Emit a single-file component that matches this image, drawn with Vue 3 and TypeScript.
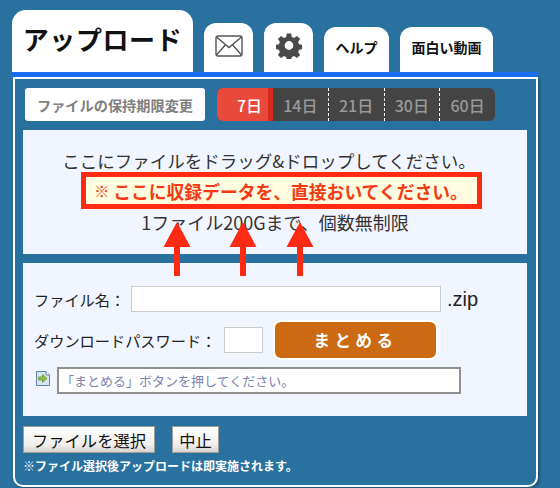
<script setup lang="ts">
const periods = ['14日', '21日', '30日', '60日'];
const arrows = [177, 243, 300];
</script>

<template>
  <div class="page">
    <nav class="tabs">
      <div class="tab main-tab">アップロード</div>
      <div class="tab icon-tab">
        <svg width="28" height="22" viewBox="0 0 28 22" fill="none" stroke="#555" stroke-width="1.4">
          <rect x="1" y="1" width="26" height="20" rx="2" />
          <path d="M1.5 2 L14 12.5 L26.5 2 M1.5 20 L10.5 9.8 M26.5 20 L17.5 9.8" />
        </svg>
      </div>
      <div class="tab icon-tab">
        <svg width="26" height="26" viewBox="0 0 26 26">
          <path
            fill="#4a4a4a"
            fill-rule="evenodd"
            d="M10.8 1h4.4l.6 3.4 2.3 1 2.9-2 3.1 3.1-2 2.9 1 2.3 3.4.6v4.4l-3.4.6-1 2.3 2 2.9-3.1 3.1-2.9-2-2.3 1-.6 3.4h-4.4l-.6-3.4-2.3-1-2.9 2-3.1-3.1 2-2.9-1-2.3-3.4-.6v-4.4l3.4-.6 1-2.3-2-2.9 3.1-3.1 2.9 2 2.3-1zM13 8.6a4.4 4.4 0 1 0 0 8.8 4.4 4.4 0 0 0 0-8.8z"
            transform="translate(0 -0.5)"
          />
        </svg>
      </div>
      <div class="tab text-tab help-tab">ヘルプ</div>
      <div class="tab text-tab movie-tab">面白い動画</div>
    </nav>
    <div class="bar"></div>

    <main class="panel">
      <div class="period-row">
        <div class="period-label">ファイルの保持期限変更</div>
        <div class="periods">
          <div class="period active">7日</div>
          <div v-for="p in periods" :key="p" class="period">{{ p }}</div>
        </div>
      </div>

      <section class="drop">
        <p class="drop-line first">ここにファイルをドラッグ&amp;ドロップしてください。</p>
        <p class="drop-notice"><span class="mark">※</span> ここに収録データを、直接おいてください。</p>
        <p class="drop-line last">1ファイル200Gまで、個数無制限</p>
      </section>

      <section class="form">
        <div class="form-row name-row">
          <label>ファイル名：</label>
          <input class="name-input" type="text" />
          <span class="ext">.zip</span>
        </div>
        <div class="form-row pass-row">
          <label>ダウンロードパスワード：</label>
          <input class="pass-input" type="text" />
          <button class="merge">まとめる</button>
        </div>
        <div class="form-row status-row">
          <svg class="status-icon" width="16" height="17" viewBox="0 0 16 17">
            <path d="M1.5 1.5h9.5l3.5 3.5v10.500h-13z" fill="#d8e6f4" stroke="#5f86aa" />
            <path d="M11 1.500v3.500h3.500" fill="#fff" stroke="#5f86aa" />
            <path d="M3.500 7h4V4.500l4.500 4-4.500 4V10h-4z" fill="#8cc63f" stroke="#4f7f1a" stroke-width=".6" />
          </svg>
          <div class="status">「まとめる」ボタンを押してください。</div>
        </div>
      </section>

      <div class="actions">
        <button class="native select">ファイルを選択</button>
        <button class="native">中止</button>
      </div>
      <p class="note">※ファイル選択後アップロードは即実施されます。</p>
    </main>

    <svg
      v-for="x in arrows"
      :key="x"
      class="arrow"
      :style="{ left: x - 14 + 'px' }"
      width="28"
      height="56"
      viewBox="0 0 28 56"
    >
      <path d="M14 0 L27.500 25 H17 V54 H11 V25 H0.500 Z" fill="#ff2a12" />
    </svg>
  </div>
</template>

<style>
html,
body {
  margin: 0;
  background: #29719f;
}
</style>

<style scoped>
.page {
  position: relative;
  width: 560px;
  height: 488px;
  overflow: hidden;
  background: #29719f;
  font-family: "Noto Sans CJK JP", "Liberation Sans", sans-serif;
  color: #222;
}

.tabs {
  display: flex;
  align-items: flex-end;
  height: 72px;
  padding-left: 12px;
}

.tab {
  display: flex;
  align-items: center;
  justify-content: center;
  box-sizing: border-box;
  background: #fff;
  color: #111;
  font-weight: 700;
}

.main-tab {
  width: 181px;
  height: 62px;
  margin-right: 11px;
  padding-bottom: 6px;
  border-radius: 14px 14px 0 0;
  font-size: 26px;
  letter-spacing: 0.6px;
}

.icon-tab {
  width: 49px;
  height: 49px;
  margin-right: 11px;
  padding-bottom: 4px;
  border-radius: 12px 12px 0 0;
}

.text-tab {
  height: 45px;
  padding-bottom: 5px;
  border-radius: 12px 12px 0 0;
  font-size: 14px;
}

.help-tab {
  width: 65px;
  margin-right: 11px;
}

.movie-tab {
  width: 93px;
}

.bar {
  width: 526px;
  height: 5px;
  margin-left: 12px;
  background: #1a6cf2;
}

.panel {
  box-sizing: border-box;
  width: 525px;
  height: 410px;
  margin-left: 13px;
  padding: 9px 9px 0 8px;
  border: 2px solid #fff;
  border-radius: 0 0 10px 10px;
  box-shadow: 2px 2px 3px rgba(0, 0, 0, 0.25);
}

.period-row {
  display: flex;
  gap: 12px;
  margin: 0 0 9px 2px;
}

.period-label {
  display: flex;
  align-items: center;
  justify-content: center;
  width: 180px;
  height: 33px;
  background: #fff;
  border-radius: 3px;
  color: #808080;
  font-size: 14.200px;
  font-weight: 700;
}

.periods {
  display: flex;
  width: 278px;
  height: 33px;
  overflow: hidden;
  background: #444;
  border-radius: 6px;
}

.period {
  display: flex;
  flex: 1;
  align-items: center;
  justify-content: center;
  box-sizing: border-box;
  color: #999;
  font-size: 16px;
  font-weight: 500;
  border-left: 1px dashed #fff;
}

.period:nth-child(2) {
  border-left: 0;
}

.period.active {
  flex: 0 0 56px;
  padding-left: 14px;
  background: #e8493b;
  color: #fff;
  border-left: 0;
  border-right: 5px solid #d42b1c;
}

.drop {
  display: flex;
  flex-direction: column;
  align-items: center;
  box-sizing: border-box;
  width: 504px;
  height: 124px;
  padding-top: 19px;
  background: #f1f5ff;
  color: #333;
}

.drop p {
  margin: 0;
}

.drop-line {
  line-height: 24px;
}

.drop-line.first {
  margin-right: 12px;
  font-size: 17.500px;
}

.drop-line.last {
  font-size: 18px;
}

.drop-notice {
  display: flex;
  align-items: center;
  justify-content: center;
  gap: 4px;
  box-sizing: border-box;
  width: 401px;
  height: 37px;
  margin: -1px 0 1px 12px !important;
  border: 5px solid #ff2a12;
  background: #fffce0;
  color: #f23b14;
  font-size: 17.800px;
  font-weight: 700;
  white-space: nowrap;
}

.mark {
  font-size: 15px;
}

.form {
  box-sizing: border-box;
  width: 504px;
  height: 153px;
  margin-top: 9px;
  padding: 23px 0 0 11px;
  background: #f1f5ff;
}

.form-row {
  display: flex;
  align-items: center;
}

.form-row label {
  color: #222;
  font-size: 15.200px;
  white-space: nowrap;
}

.form-row input {
  box-sizing: border-box;
  height: 26px;
  border: 1px solid #ccc;
  background: #fff;
  outline: none;
}

.name-row label {
  width: 97px;
}

.name-input {
  width: 310px;
}

.ext {
  margin-left: 6px;
  font-family: "Liberation Sans", sans-serif;
  font-size: 20px;
}

.pass-row {
  height: 40px;
  margin-top: 8px;
}

.pass-row label {
  width: 190px;
}

.pass-input {
  width: 39px;
}

.merge {
  box-sizing: border-box;
  width: 165px;
  height: 40px;
  margin-left: 10px;
  padding: 0;
  border: 2px solid #fff;
  border-radius: 8px;
  background: #cb6a12;
  color: #fff;
  font-family: inherit;
  font-size: 16.500px;
  font-weight: 700;
  letter-spacing: 4.500px;
}

.status-row {
  margin-top: 7px;
  margin-left: 1px;
}

.status-icon {
  flex: none;
  margin: -4px 6px 0 0;
}

.status {
  box-sizing: border-box;
  width: 404px;
  height: 27px;
  padding-left: 2px;
  border: 2px solid #909090;
  background: #fff;
  color: #8082b0;
  font-size: 13px;
  line-height: 23px;
}

.actions {
  display: flex;
  gap: 17px;
  margin-top: 10px;
}

.native {
  box-sizing: border-box;
  width: 47px;
  height: 27px;
  padding: 0;
  border: 1px solid #a09c96;
  background: linear-gradient(#fff, #f1efec 70%, #d8d5d0);
  color: #111;
  font-family: inherit;
  font-size: 16.300px;
}

.native.select {
  width: 132px;
}

.note {
  margin: 5px 0 0;
  color: #fff;
  font-size: 12px;
  font-weight: 700;
  line-height: 16px;
}

.arrow {
  position: absolute;
  top: 222px;
}
</style>
